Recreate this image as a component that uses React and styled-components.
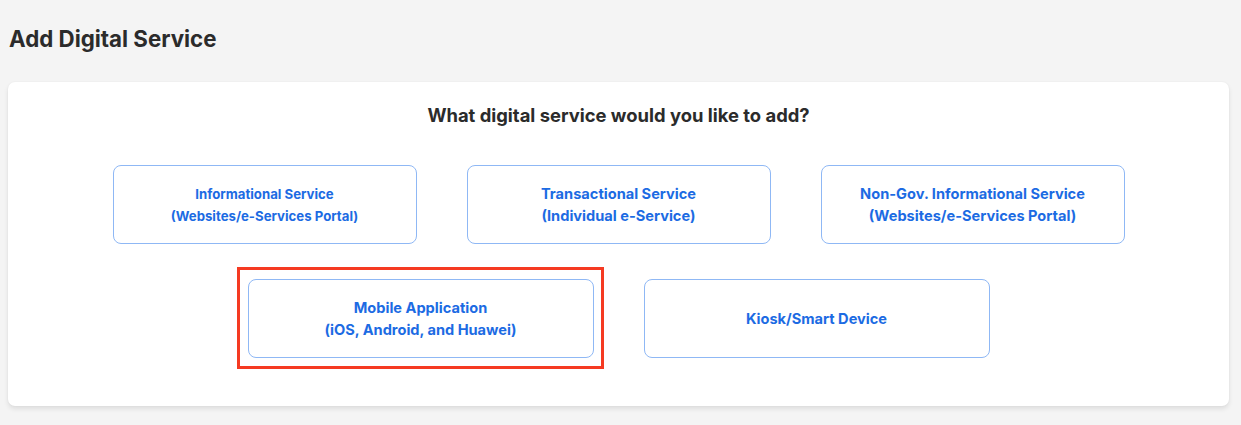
import React from 'react';
import styled, { createGlobalStyle } from 'styled-components';

const GlobalStyle = createGlobalStyle`
  html, body {
    margin: 0;
    padding: 0;
    background: #f4f4f4;
    font-family: Inter, "Liberation Sans", sans-serif;
  }
`;

const services = [
  [
    { id: 'info', lines: ['Informational Service', '(Websites/e-Services Portal)'], small: true },
    { id: 'trans', lines: ['Transactional Service', '(Individual e-Service)'] },
    { id: 'nongov', lines: ['Non-Gov. Informational Service', '(Websites/e-Services Portal)'] },
  ],
  [
    { id: 'mobile', lines: ['Mobile Application', '(iOS, Android, and Huawei)'], selected: true },
    { id: 'kiosk', lines: ['Kiosk/Smart Device'] },
  ],
];

const App = () => {
  return (
    <Page>
      <GlobalStyle />
      <Title>Add Digital Service</Title>
      <Card>
        <Question>What digital service would you like to add?</Question>
        <Options>
          {services.map((row, i) => (
            <OptionRow key={i} wide={i === 1}>
              {row.map((s) => (
                <OptionButton key={s.id} selected={s.selected} small={s.small}>
                  {s.lines.map((l) => (
                    <span key={l}>{l}</span>
                  ))}
                </OptionButton>
              ))}
            </OptionRow>
          ))}
        </Options>
      </Card>
    </Page>
  );
};

const Page = styled.div`
  width: 1241px;
  height: 425px;
  padding: 24px 12px 0 8px;
  box-sizing: border-box;
  overflow: hidden;
`;

const Title = styled.h1`
  margin: 0 0 0 1px;
  font-size: 22.3px;
  line-height: 30px;
  font-weight: 700;
  color: #2b2b2b;
  letter-spacing: 0;
`;

const Card = styled.div`
  margin-top: 28px;
  background: #fff;
  border-radius: 7px;
  box-shadow: 0 3px 5px rgba(0, 0, 0, 0.09), 0 0 2px rgba(0, 0, 0, 0.05);
  padding: 21px 0 48px;
  display: flex;
  flex-direction: column;
  align-items: center;
`;

const Question = styled.h2`
  margin: 0;
  font-size: 18.4px;
  line-height: 24px;
  font-weight: 700;
  color: #2b2b2b;
`;

const Options = styled.div`
  margin-top: 38px;
  display: flex;
  flex-direction: column;
  gap: 35px;
  align-items: center;
`;

const OptionRow = styled.div`
  display: grid;
  grid-template-columns: repeat(${(p) => (p.wide ? 2 : 3)}, ${(p) => (p.wide ? '346px' : '304px')});
  gap: 50px;
`;

const OptionButton = styled.button`
  position: relative;
  height: 79px;
  box-sizing: border-box;
  background: #fff;
  border: 1px solid #8fb8f5;
  border-radius: 8px;
  display: flex;
  flex-direction: column;
  align-items: center;
  justify-content: center;
  font-family: inherit;
  font-size: ${(p) => (p.small ? '13.2px' : '14.6px')};
  line-height: 22px;
  font-weight: 700;
  color: #1c6be3;
  cursor: pointer;

  &::after {
    content: '';
    display: ${(p) => (p.selected ? 'block' : 'none')};
    position: absolute;
    inset: -13px -11px -12px -12px;
    border: 3px solid #f53a22;
    pointer-events: none;
  }
`;

export default App;
